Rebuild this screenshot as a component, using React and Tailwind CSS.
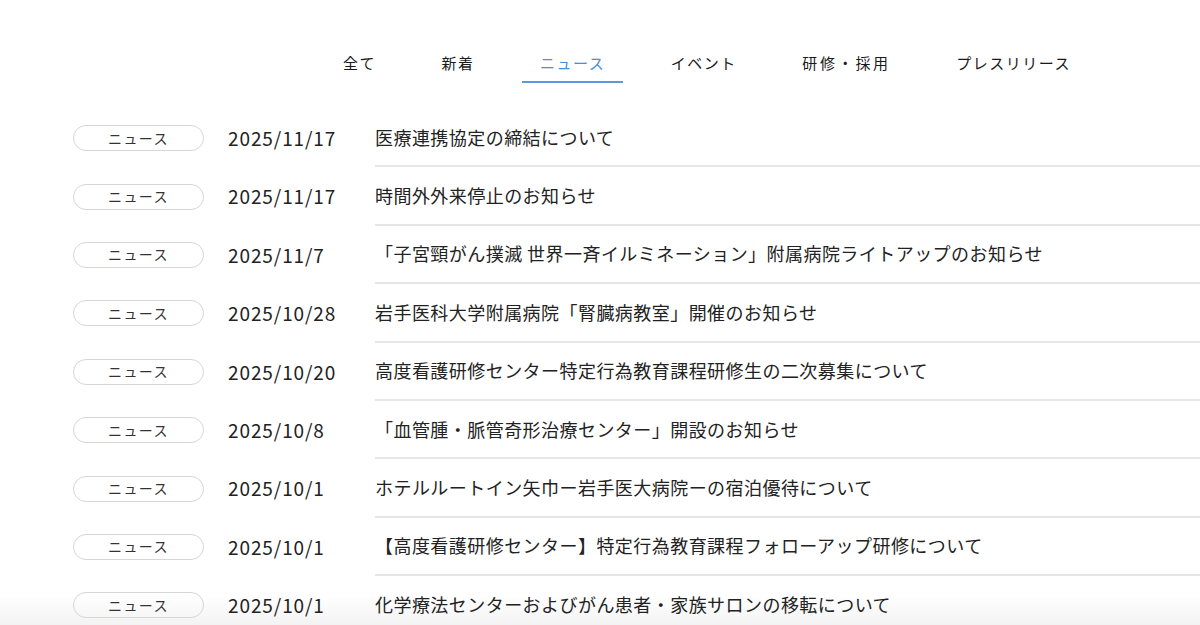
import React from "react";

const tabs = ["全て", "新着", "ニュース", "イベント", "研修・採用", "プレスリリース"];

const rows = [
  ["2025/11/17", "医療連携協定の締結について"],
  ["2025/11/17", "時間外外来停止のお知らせ"],
  ["2025/11/7", "「子宮頸がん撲滅 世界一斉イルミネーション」附属病院ライトアップのお知らせ"],
  ["2025/10/28", "岩手医科大学附属病院「腎臓病教室」開催のお知らせ"],
  ["2025/10/20", "高度看護研修センター特定行為教育課程研修生の二次募集について"],
  ["2025/10/8", "「血管腫・脈管奇形治療センター」開設のお知らせ"],
  ["2025/10/1", "ホテルルートイン矢巾ー岩手医大病院ーの宿泊優待について"],
  ["2025/10/1", "【高度看護研修センター】特定行為教育課程フォローアップ研修について"],
  ["2025/10/1", "化学療法センターおよびがん患者・家族サロンの移転について"],
];

export default function App() {
  return (
    <div
      className="relative w-[1200px] h-[625px] overflow-hidden bg-white text-[#222]"
      style={{ fontFamily: '"Noto Sans CJK JP", "Noto Sans", sans-serif' }}
    >
      <div className="absolute left-0 right-0 bottom-0 h-[30px] bg-gradient-to-b from-white to-[#f3f3f3]" />
      <div className="relative">
        <nav className="flex pl-[325px] pt-[52px] gap-[29.5px]">
          {tabs.map((t) => (
            <div
              key={t}
              className={
                "px-[18px] pb-[7px] text-[15px] leading-[22px] tracking-[1.5px] border-b-2 " +
                (t === "ニュース"
                  ? "text-[#4a8fd6] border-[#5b9ad9]"
                  : "text-[#1a1a1a] border-transparent") +
                (t === "研修・採用" ? " tracking-[2.7px]" : "")
              }
            >
              {t}
            </div>
          ))}
        </nav>
        <ul className="mt-[26px] pl-[73px]">
          {rows.map(([d, title], i) => (
            <li key={i} className="flex items-center h-[58.4px]">
              <span className="w-[131px] h-[26px] rounded-full border border-[#d6d6d6] flex items-center justify-center text-[14px] tracking-[1.4px] text-[#333] shrink-0">
                ニュース
              </span>
              <span className="w-[171px] pl-[24px] text-[19px] tracking-[0.9px] shrink-0">{d}</span>
              <span className="flex-1 h-full flex items-center border-b-2 border-[#e6e6e6] text-[18px] tracking-[0.45px] whitespace-nowrap">
                {title}
              </span>
            </li>
          ))}
        </ul>
      </div>
    </div>
  );
}
